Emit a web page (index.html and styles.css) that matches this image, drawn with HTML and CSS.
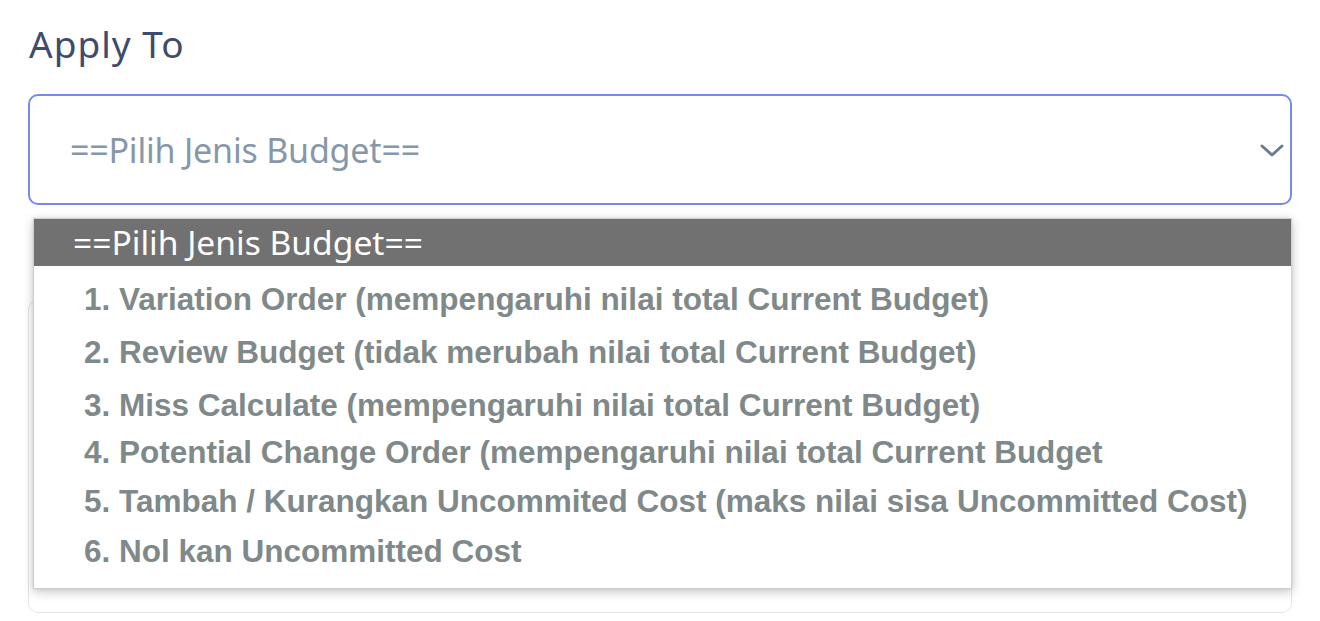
FILE: index.html
```html
<!DOCTYPE html>
<html>
<head>
<meta charset="utf-8">
<link rel="stylesheet" href="styles.css">
</head>
<body>
<div class="page">
  <div class="field">
    <div class="label">Apply To</div>
    <div class="select">
      <span class="placeholder">==Pilih Jenis Budget==</span>
      <svg class="chev" width="26" height="16" viewBox="0 0 26 16"><path d="M3 4 L13 13 L23 4" fill="none" stroke="#6b7c90" stroke-width="3" stroke-linecap="round" stroke-linejoin="round"/></svg>
    </div>
    <div class="under"></div>
    <div class="dropdown">
      <div class="opt-head">==Pilih Jenis Budget==</div>
      <ul class="opts">
        <li class="o1">1. Variation Order (mempengaruhi nilai total Current Budget)</li>
        <li class="o2">2. Review Budget (tidak merubah nilai total Current Budget)</li>
        <li class="o3">3. Miss Calculate (mempengaruhi nilai total Current Budget)</li>
        <li class="o4">4. Potential Change Order (mempengaruhi nilai total Current Budget</li>
        <li class="o5">5. Tambah / Kurangkan Uncommited Cost (maks nilai sisa Uncommitted Cost)</li>
        <li class="o6">6. Nol kan Uncommitted Cost</li>
      </ul>
    </div>
  </div>
</div>
</body>
</html>
```
FILE: styles.css
```css
html, body {
  margin: 0;
  padding: 0;
  background: #ffffff;
}
.page {
  width: 1320px;
  height: 621px;
  overflow: hidden;
}
.field {
  position: relative;
  padding: 22px 28px 0 28px;
}
.label {
  font-family: "Noto Sans", sans-serif;
  font-size: 37px;
  line-height: 44px;
  color: #3f4b6c;
  padding-left: 1px;
  letter-spacing: 1px;
}
.select {
  margin-top: 28px;
  height: 107px;
  border: 2px solid #778aec;
  border-radius: 10px;
  display: flex;
  align-items: center;
  justify-content: space-between;
  padding: 0 5px 0 40px;
  box-sizing: content-box;
}
.placeholder {
  font-family: "Noto Sans", sans-serif;
  font-size: 34px;
  color: #8797aa;
  letter-spacing: -0.2px;
}
.chev {
  display: block;
}
.under {
  margin-top: 95px;
  height: 311px;
  border: 1px solid #e3e5ea;
  border-radius: 10px;
}
.dropdown {
  position: absolute;
  left: 33px;
  top: 218px;
  width: 1257px;
  height: 369px;
  background: #ffffff;
  border: 1px solid #cfcfcf;
  box-shadow: 0 3px 10px rgba(0, 0, 0, 0.22), 0 0 4px rgba(0,0,0,0.08);
}
.opt-head {
  height: 47px;
  background: #717171;
  color: #ffffff;
  font-family: "Noto Sans", sans-serif;
  font-size: 33.6px;
  line-height: 47px;
  padding-left: 39px;
  letter-spacing: 0;
}
.opts {
  list-style: none;
  margin: 0;
  padding: 8px 0 0 50px;
}
.opts li {
  font-family: "Liberation Sans", Arial, sans-serif;
  font-weight: bold;
  font-size: 31.5px;
  color: #7f8989;
  height: 50px;
  line-height: 50px;
  white-space: nowrap;
}
.opts .o1 { height: 53px; }
.opts .o2 { height: 53px; }
.opts .o3 { height: 47px; }
.opts .o4 { height: 49px; }
.opts .o5 { height: 50px; }
```
